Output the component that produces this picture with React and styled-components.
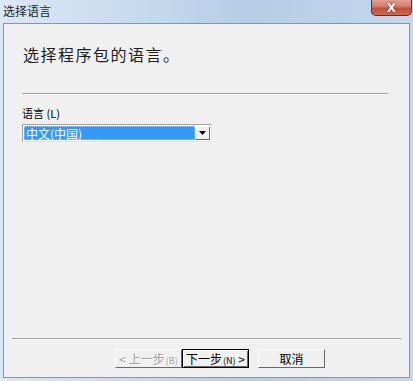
import styled, { createGlobalStyle } from "styled-components";

const Global = createGlobalStyle`
  html, body { margin: 0; padding: 0; background: #ffffff; }
  body { font-family: "Noto Sans CJK SC", "Noto Sans", sans-serif; }
`;

const Window = styled.div`
  width: 413px;
  height: 381px;
  display: flex;
  flex-direction: column;
  background: linear-gradient(90deg, #dbe8f6 0%, #c6d9ee 35%, #b6cde7 60%, #c4d7ed 100%);
  box-sizing: border-box;
`;

const TitleBar = styled.div`
  height: 23px;
  display: flex;
  align-items: flex-start;
  justify-content: space-between;
  padding-left: 3px;
  flex-shrink: 0;
`;

const Title = styled.div`
  font-size: 12px;
  line-height: 16px;
  color: #1e1e1e;
  margin-top: 3px;
`;

const CloseButton = styled.div`
  width: 41px;
  height: 16px;
  margin-right: 1px;
  box-sizing: border-box;
  border: 1px solid #6f2a22;
  border-top: none;
  border-radius: 0 0 5px 5px;
  background: linear-gradient(180deg, #e3a093 0%, #d47a68 45%, #c0503c 55%, #cb6a55 100%);
  display: flex;
  align-items: center;
  justify-content: center;
  color: #ffffff;
  font-family: "DejaVu Sans", sans-serif;
  font-weight: bold;
  font-size: 12px;
  text-shadow: 0 0 2px #5a1a12;
`;

const Client = styled.div`
  flex: 1;
  margin: 0 3px 3px 3px;
  border: 1px solid #8596ab;
  background: #f0f0f0;
  display: flex;
  flex-direction: column;
`;

const Body = styled.div`
  flex: 1;
  padding: 20px 21px 0 18px;
  display: flex;
  flex-direction: column;
`;

const Heading = styled.div`
  font-size: 16px;
  line-height: 20px;
  color: #1e1e1e;
  letter-spacing: 1.5px;
  padding-left: 1px;
`;

const Separator = styled.div`
  height: 0;
  border-top: 1px solid #a0a0a0;
  border-bottom: 1px solid #ffffff;
  margin: ${p => p.$margin || "0"};
`;

const Label = styled.div`
  font-size: 11px;
  line-height: 16px;
  color: #000000;
  margin-top: 10px;
`;

const Combo = styled.div`
  width: 190px;
  height: 18px;
  margin-top: 3px;
  box-sizing: border-box;
  border: 1px solid #a0a0a0;
  border-right-color: #e3e3e3;
  border-bottom-color: #e3e3e3;
  background: #ffffff;
  padding: 1px;
  display: flex;
`;

const Selected = styled.div`
  flex: 1;
  background: #3399ff;
  color: #ffffff;
  font-size: 12px;
  line-height: 14px;
  padding-left: 1px;
  border: 1px dotted #9fcfff;
`;

const DropButton = styled.div`
  width: 15px;
  box-sizing: border-box;
  background: #f0f0f0;
  border: 1px solid;
  border-color: #ffffff #696969 #696969 #ffffff;
  display: flex;
  align-items: center;
  justify-content: center;
`;

const Footer = styled.div`
  display: flex;
  flex-direction: column;
`;

const ButtonRow = styled.div`
  display: flex;
  justify-content: flex-end;
  padding: 9px 84px 9px 0;
`;

const Button = styled.div`
  width: 67px;
  height: 19px;
  box-sizing: border-box;
  background: #f0f0f0;
  border: 1px solid;
  border-color: ${p => (p.$default ? "#000000" : "#ffffff #696969 #696969 #ffffff")};
  box-shadow: ${p => (p.$default ? "inset 1px 1px 0 #ffffff, inset -1px -1px 0 #696969" : "none")};
  color: ${p => (p.$disabled ? "#a0a0a0" : "#000000")};
  text-shadow: ${p => (p.$disabled ? "1px 1px 0 #ffffff" : "none")};
  font-size: 12px;
  line-height: 17px;
  text-align: center;
  margin-left: ${p => p.$gap || 0}px;
  white-space: nowrap;
`;

const Small = styled.span`
  font-size: 9px;
  margin-left: 1px;
`;

export default function App() {
  return (
    <>
      <Global />
      <Window>
        <TitleBar>
          <Title>选择语言</Title>
          <CloseButton>X</CloseButton>
        </TitleBar>
        <Client>
          <Body>
            <Heading>选择程序包的语言。</Heading>
            <Separator $margin="29px 0 0 0" />
            <Label>语言 (L)</Label>
            <Combo>
              <Selected>中文(中国)</Selected>
              <DropButton>
                <svg width="7" height="4" viewBox="0 0 7 4">
                  <path d="M0 0H7L3.5 4Z" fill="#000" />
                </svg>
              </DropButton>
            </Combo>
          </Body>
          <Footer>
            <Separator $margin="0 8px" />
            <ButtonRow>
              <Button $disabled>&lt; 上一步<Small>(B)</Small></Button>
              <Button $default>下一步<Small>(N)</Small> &gt;</Button>
              <Button $gap={9}>取消</Button>
            </ButtonRow>
          </Footer>
        </Client>
      </Window>
    </>
  );
}
